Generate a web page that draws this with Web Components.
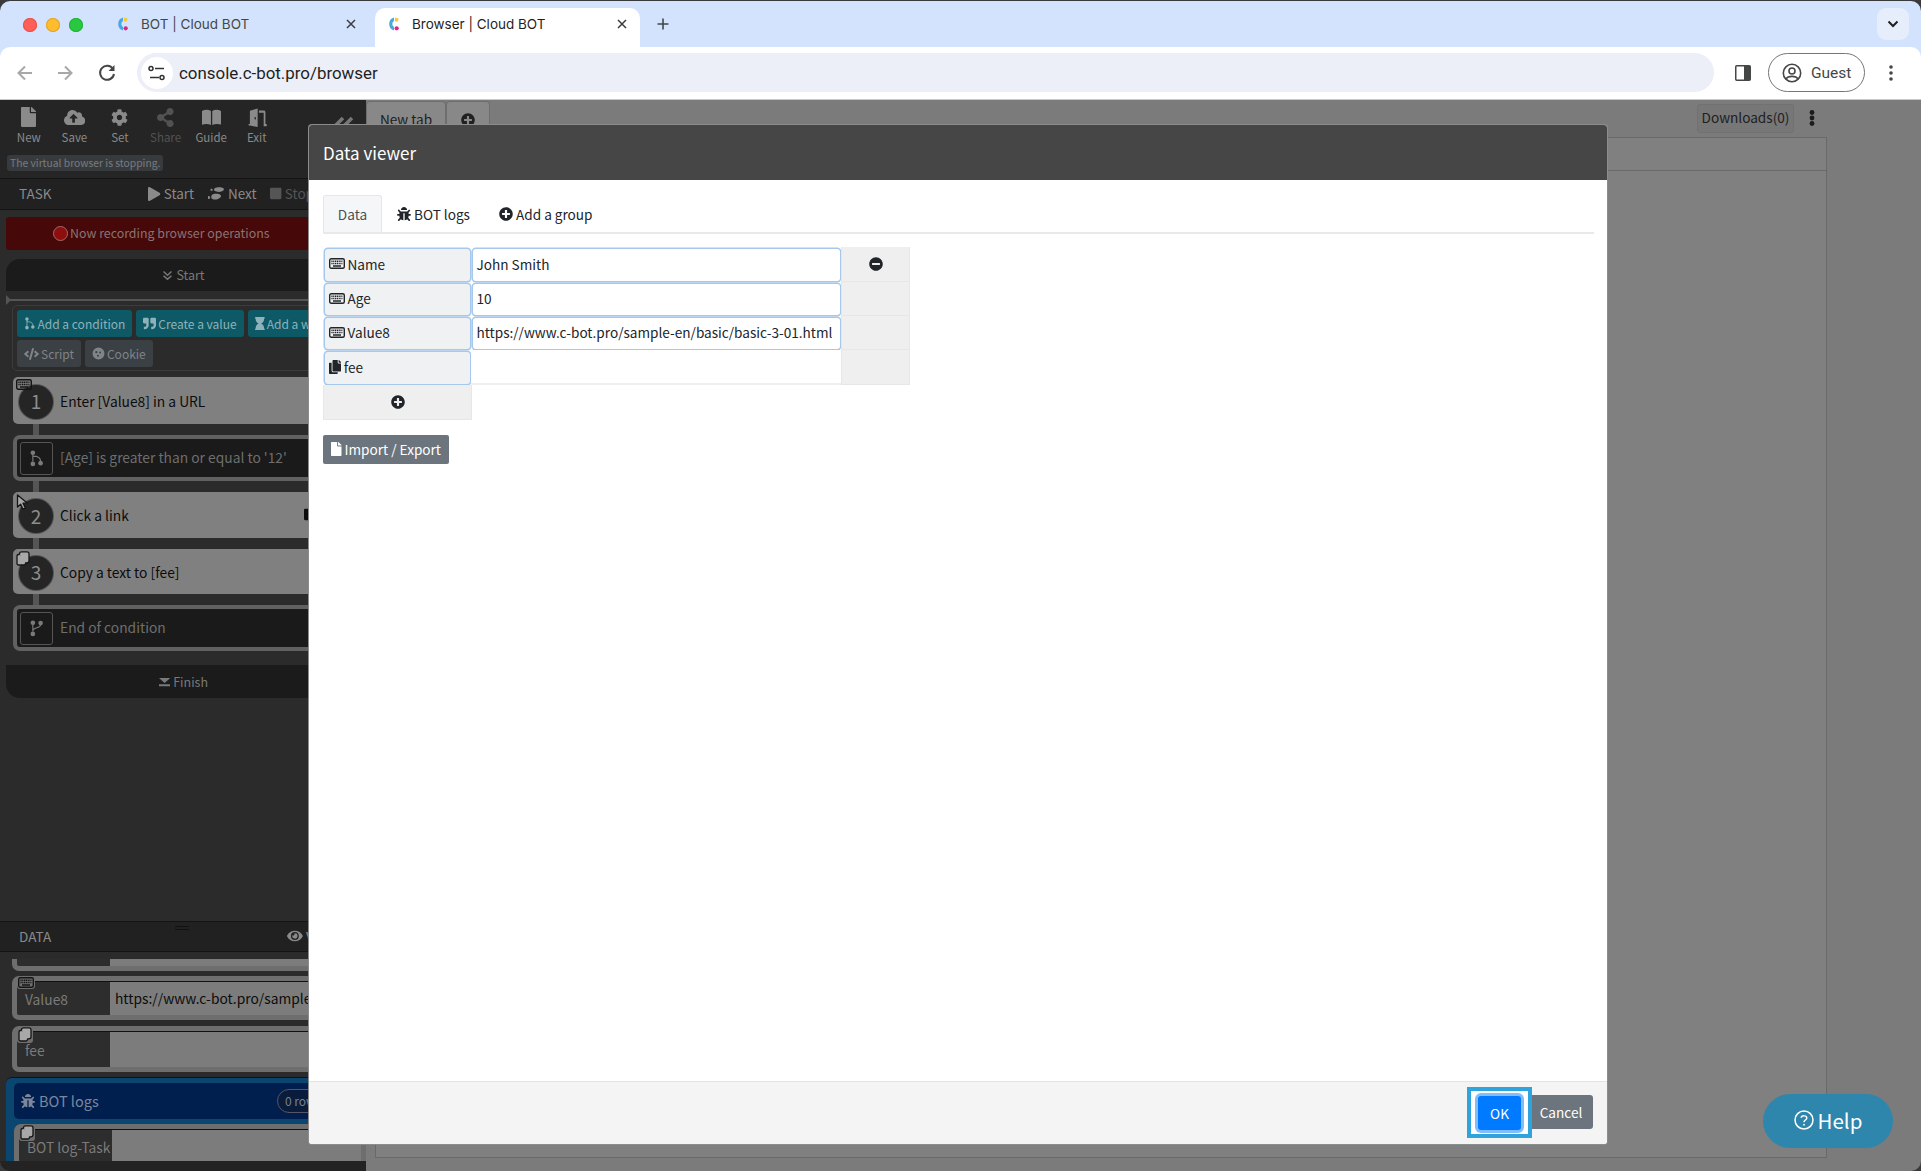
<!DOCTYPE html>
<html lang="en">

<head>
  <meta charset="UTF-8">
  <title>Browser | Cloud BOT</title>
  <link rel="icon" href="data:,">
  <style>
    html,
    body {
      margin: 0;
      height: 100%;
      overflow: hidden;
      background: #3a3a3a;
    }

    body {
      font-family: "Noto Sans CJK JP", "Noto Sans", sans-serif;
    }

    #win {
      display: flex;
      flex-direction: column;
      height: 1170px;
      margin-top: 1px;
      border-radius: 10px;
      overflow: hidden;
      position: relative;
    }
  </style>
</head>

<body>
  <div id="win">
    <browser-chrome></browser-chrome>
    <app-page>
      <app-sidebar></app-sidebar>
      <browser-pane></browser-pane>
    </app-page>
    <data-viewer></data-viewer>
    <help-button></help-button>
  </div>

  <script>
    // [viewBox width, viewBox height, path]
    const ICONS = {
      file: [384, 512, 'M224 136V0H24C10.7 0 0 10.7 0 24v464c0 13.3 10.7 24 24 24h336c13.3 0 24-10.7 24-24V160H248c-13.2 0-24-10.8-24-24zm160-14.1v6.1H256V0h6.1c6.4 0 12.5 2.5 17 7l97.9 98c4.5 4.5 7 10.6 7 16.9z'],
      play: [448, 512, 'M424.4 214.7L72.4 6.6C43.8-10.3 0 6.1 0 47.9V464c0 37.5 40.7 60.1 72.4 41.3l352-208c31.4-18.5 31.5-64.1 0-82.6z'],
      plus: [512, 512, 'M256 8C119 8 8 119 8 256s111 248 248 248 248-111 248-248S393 8 256 8zm144 276c0 6.6-5.4 12-12 12h-92v92c0 6.6-5.4 12-12 12h-56c-6.6 0-12-5.4-12-12v-92h-92c-6.6 0-12-5.4-12-12v-56c0-6.6 5.4-12 12-12h92v-92c0-6.6 5.4-12 12-12h56c6.6 0 12 5.4 12 12v92h92c6.6 0 12 5.4 12 12v56z'],
      minus: [512, 512, 'M256 8C119 8 8 119 8 256s111 248 248 248 248-111 248-248S393 8 256 8zM124 296c-6.6 0-12-5.4-12-12v-56c0-6.6 5.4-12 12-12h264c6.6 0 12 5.4 12 12v56c0 6.6-5.4 12-12 12H124z'],
      stop: [448, 512, 'M400 32H48C21.5 32 0 53.5 0 80v352c0 26.5 21.5 48 48 48h352c26.5 0 48-21.5 48-48V80c0-26.5-21.5-48-48-48z'],
      share: [448, 512, 'M352 320c-22.608 0-43.387 7.819-59.79 20.895l-102.486-64.054a96.551 96.551 0 0 0 0-41.683l102.486-64.054C308.613 184.181 329.392 192 352 192c53.019 0 96-42.981 96-96S405.019 0 352 0s-96 42.981-96 96c0 7.158.79 14.13 2.276 20.841L155.79 180.895C139.387 167.819 118.608 160 96 160c-53.019 0-96 42.981-96 96s42.981 96 96 96c22.608 0 43.387-7.819 59.79-20.895l102.486 64.054A96.301 96.301 0 0 0 256 416c0 53.019 42.981 96 96 96s96-42.981 96-96-42.981-96-96-96z'],
      cog: [512, 512, 'M487.4 315.7l-42.6-24.6c4.3-23.2 4.3-47 0-70.2l42.6-24.6c4.9-2.8 7.1-8.6 5.5-14-11.1-35.6-30-67.8-54.7-94.6-3.8-4.1-10-5.1-14.8-2.3L380.8 110c-17.9-15.4-38.5-27.3-60.8-35.1V25.8c0-5.6-3.9-10.5-9.4-11.7-36.7-8.2-74.3-7.8-109.2 0-5.5 1.2-9.4 6.1-9.4 11.7V75c-22.2 7.9-42.8 19.8-60.8 35.1L88.7 85.5c-4.9-2.8-11-1.9-14.8 2.3-24.7 26.7-43.6 58.9-54.7 94.6-1.7 5.4.6 11.2 5.5 14L67.3 221c-4.3 23.2-4.3 47 0 70.2l-42.6 24.6c-4.9 2.8-7.1 8.6-5.5 14 11.1 35.6 30 67.8 54.7 94.6 3.8 4.1 10 5.1 14.8 2.3l42.6-24.6c17.9 15.4 38.5 27.3 60.8 35.1v49.2c0 5.6 3.9 10.5 9.4 11.7 36.7 8.2 74.3 7.8 109.2 0 5.5-1.2 9.4-6.1 9.4-11.7v-49.2c22.2-7.9 42.8-19.8 60.8-35.1l42.6 24.6c4.9 2.8 11 1.9 14.8-2.3 24.7-26.7 43.6-58.9 54.7-94.6 1.5-5.5-.7-11.3-5.6-14.1zM256 336c-44.1 0-80-35.9-80-80s35.9-80 80-80 80 35.9 80 80-35.9 80-80 80z'],
      upload: [640, 512, 'M537.6 226.6c4.1-10.7 6.4-22.4 6.4-34.6 0-53-43-96-96-96-19.7 0-38.1 6-53.3 16.2C367 64.2 315.3 32 256 32c-88.4 0-160 71.6-160 160 0 2.7.1 5.4.2 8.1C40.2 219.8 0 273.2 0 336c0 79.5 64.5 144 144 144h368c70.7 0 128-57.3 128-128 0-61.9-44-113.6-102.4-125.4zM393.4 288H328v112c0 8.8-7.2 16-16 16h-48c-8.8 0-16-7.2-16-16V288h-65.4c-14.3 0-21.4-17.2-11.3-27.3l105.4-105.4c6.2-6.2 16.4-6.2 22.6 0l105.4 105.4c10.1 10.1 2.9 27.3-11.3 27.3z'],
      book: [24, 20, 'M0 2.500C3.500.6 8 .6 11.200 2.400V20C8 18.300 3.500 18.300 0 19.600zM24 2.500C20.500.6 16 .6 12.800 2.400V20c3.200-1.700 7.700-1.700 11.200-.4z'],
      exit: [24, 22, 'M3 18.500h1.500V3.200L13.500.5V22l-9-1.600H3zM10 10.500v2.500l1.500.3v-2.500zM15 3h5.500c1.200 0 2 .8 2 2v13.500H24V21h-3.500V5.500H15z'],
      copy: [448, 512, 'M320 448v40c0 13.255-10.745 24-24 24H24c-13.255 0-24-10.745-24-24V120c0-13.255 10.745-24 24-24h72v296c0 30.879 25.121 56 56 56h168zm0-344V0H152c-13.255 0-24 10.745-24 24v368c0 13.255 10.745 24 24 24h272c13.255 0 24-10.745 24-24V128H344c-13.2 0-24-10.8-24-24zm120.971-31.029L375.029 7.029A24 24 0 0 0 358.059 0H352v96h96v-6.059a24 24 0 0 0-7.029-16.97z'],
      bug: [512, 512, 'M511.988 288.9c-.478 17.43-15.217 31.1-32.653 31.1H424v16c0 21.864-4.882 42.584-13.6 61.145l60.228 60.228c12.496 12.497 12.496 32.758 0 45.255-12.498 12.497-32.759 12.496-45.256 0l-54.736-54.736C345.886 467.965 314.351 480 280 480V236c0-6.627-5.373-12-12-12h-24c-6.627 0-12 5.373-12 12v244c-34.351 0-65.886-12.035-90.636-32.108l-54.736 54.736c-12.498 12.497-32.759 12.496-45.256 0-12.496-12.497-12.496-32.758 0-45.255l60.228-60.228C92.882 378.584 88 357.864 88 336v-16H32.666C15.23 320 .491 306.33.013 288.9-.484 270.816 14.028 256 32 256h56v-58.745l-46.628-46.628c-12.496-12.497-12.496-32.758 0-45.255 12.498-12.497 32.758-12.497 45.256 0L141.255 160h229.489l54.627-54.627c12.498-12.497 32.758-12.497 45.256 0 12.496 12.497 12.496 32.758 0 45.255L424 197.255V256h56c17.972 0 32.484 14.816 31.988 32.9zM257 0c-61.856 0-112 50.144-112 112h224C369 50.144 318.856 0 257 0z'],
      quote: [512, 512, 'M464 32H336c-26.5 0-48 21.5-48 48v128c0 26.5 21.5 48 48 48h80v64c0 35.3-28.7 64-64 64h-8c-13.3 0-24 10.7-24 24v48c0 13.3 10.7 24 24 24h8c88.4 0 160-71.6 160-160V80c0-26.5-21.5-48-48-48zm-288 0H48C21.5 32 0 53.5 0 80v128c0 26.5 21.5 48 48 48h80v64c0 35.3-28.7 64-64 64h-8c-13.3 0-24 10.7-24 24v48c0 13.3 10.7 24 24 24h8c88.4 0 160-71.6 160-160V80c0-26.5-21.5-48-48-48z'],
      hourglass: [384, 512, 'M360 0H24C10.745 0 0 10.745 0 24v16c0 13.255 10.745 24 24 24 0 90.965 51.016 167.734 120.842 192C75.016 280.266 24 357.035 24 448c-13.255 0-24 10.745-24 24v16c0 13.255 10.745 24 24 24h336c13.255 0 24-10.745 24-24v-16c0-13.255-10.745-24-24-24 0-90.965-51.016-167.734-120.842-192C308.984 231.734 360 154.965 360 64c13.255 0 24-10.745 24-24V24c0-13.255-10.745-24-24-24z'],
      code: [640, 512, 'M278.9 511.5l-61-17.7c-6.4-1.8-10-8.5-8.2-14.9L346.2 8.7c1.8-6.4 8.5-10 14.9-8.2l61 17.7c6.4 1.8 10 8.5 8.2 14.9L293.8 503.3c-1.9 6.4-8.5 10.1-14.9 8.2zm-114-112.2l43.5-46.4c4.6-4.9 4.3-12.7-.8-17.2L117 256l90.6-79.7c5.1-4.5 5.5-12.3.8-17.2l-43.5-46.4c-4.5-4.8-12.1-5.1-17-.5L3.8 247.2c-5.1 4.7-5.1 12.8 0 17.5l144.1 135.1c4.9 4.6 12.5 4.4 17-.5zm327.2.6l144.1-135.1c5.1-4.7 5.1-12.8 0-17.5L492.1 112.1c-4.8-4.5-12.4-4.3-17 .5L431.6 159c-4.6 4.9-4.3 12.7.8 17.2L523 256l-90.6 79.7c-5.1 4.5-5.5 12.3-.8 17.2l43.5 46.4c4.5 4.9 12.1 5.1 17 .6z'],
      cookie: [24, 24, 'M12 1a11 11 0 1 0 0 22 11 11 0 0 0 0-22zM8 7.500a2 2 0 1 1 0 4 2 2 0 0 1 0-4zm7 1a1.700 1.700 0 1 1 0 3.400 1.700 1.700 0 0 1 0-3.400zm-4 6a1.800 1.800 0 1 1 0 3.600 1.800 1.800 0 0 1 0-3.600z'],
      eye: [576, 512, 'M572.52 241.4C518.29 135.59 410.93 64 288 64S57.68 135.64 3.48 241.41a32.35 32.35 0 0 0 0 29.19C57.71 376.41 165.07 448 288 448s230.32-71.64 284.52-177.41a32.35 32.35 0 0 0 0-29.19zM288 400a144 144 0 1 1 144-144 143.93 143.93 0 0 1-144 144zm0-240a95.31 95.31 0 0 0-25.31 3.79 47.85 47.85 0 0 1-66.9 66.9A95.78 95.78 0 1 0 288 160z'],
      steps: [24, 20, 'M10 1.500C13 .2 19 .2 21.500 1.500 24 3 22.500 6 18 6.800c-3 .5-6.500 0-8.500-1.300C8 4.500 8.500 2.300 10 1.500zM7 10.200c4-1 9.500-.5 11 1.300 1.500 2 -.5 5-4.500 6-3.500 .8-7.500.3-8.500-1.500-1-2 .2-5.200 2-5.800zM1 17a2 2 0 1 1 .1 0zM5 5.500a1.500 1.500 0 1 1 .1 0z'],
      dbldown: [16, 16, 'M3 1.500 8 6l5-4.500 1.500 1.500L8 9 1.500 3zM3 7.500 8 12l5-4.500 1.500 1.500L8 15 1.500 9z'],
      finish: [20, 16, 'M0 0h20l-10 9zM0 11h20v3.500H0z']
    };

    class BaseEl extends HTMLElement {
      constructor(html) {
        super();
        this.attachShadow({ mode: 'open' }).innerHTML = html;
      }
    }

    customElements.define('fa-icon', class extends HTMLElement {
      connectedCallback() {
        if (this.shadowRoot) return;
        const [w, h, d] = ICONS[this.getAttribute('name')];
        const size = parseFloat(this.getAttribute('size') || 14);
        this.attachShadow({ mode: 'open' }).innerHTML = `
          <style>:host { display: inline-flex; flex: none; } svg { display: block; fill: currentColor; }</style>
          <svg viewBox="0 0 ${w} ${h}" width="${size * w / h}" height="${size}"><path fill-rule="evenodd" d="${d}"/></svg>`;
      }
    });

    // keyboard used on labels and step badges
    customElements.define('key-icon', class extends BaseEl {
      constructor() {
        super(`<style>:host { display: inline-flex; flex: none; } svg { display: block; }</style>
          <svg width="16" height="11" viewBox="0 0 16 11">
            <rect x=".7" y=".7" width="14.600" height="9.600" rx="1.500" fill="none" stroke="currentColor" stroke-width="1.400"/>
            <path d="M2.400 3.200h11.200M2.400 5.500h11.200" stroke="currentColor" stroke-width="1.500" stroke-dasharray="1.200 .6" fill="none"/>
            <path d="M4 8h8" stroke="currentColor" stroke-width="1.500" fill="none"/>
          </svg>`);
      }
    });

    // flow icons: fork with three dots, type=branch or type=merge
    customElements.define('fork-icon', class extends HTMLElement {
      connectedCallback() {
        if (this.shadowRoot) return;
        const size = parseFloat(this.getAttribute('size') || 14);
        const merge = this.getAttribute('type') === 'merge';
        const curve = merge ? 'M5 5v10M15 6C15 11 5 9 5 14' : 'M5 5v10M5 8C11 8 15 9 15 15';
        const dot = merge ? 4 : 17;
        this.attachShadow({ mode: 'open' }).innerHTML = `
          <style>:host { display: inline-flex; flex: none; } svg { display: block; }</style>
          <svg viewBox="0 0 20 22" width="${size * 20 / 22}" height="${size}" fill="currentColor">
            <path d="${curve}" fill="none" stroke="currentColor" stroke-width="1.500"/>
            <circle cx="5" cy="3.500" r="3"/><circle cx="5" cy="18" r="3"/><circle cx="15" cy="${dot}" r="3"/>
          </svg>`;
      }
    });

    // badges sitting on the corner of a step or data row
    customElements.define('copy-badge', class extends BaseEl {
      constructor() {
        super(`<style>:host { display: inline-flex; flex: none; } svg { display: block; }</style>
          <svg width="14" height="15" viewBox="0 0 14 15" fill="#a8a8a8" stroke="#141414" stroke-width="1.300">
            <rect x="3.500" y=".8" width="9.500" height="11" rx="2"/>
            <path d="M3.500 3.500H2.500a1.500 1.500 0 0 0-1.500 1.500v7.500a1.500 1.500 0 0 0 1.500 1.500H8a1.500 1.500 0 0 0 1.500-1.500v-.7"/>
          </svg>`);
      }
    });

    customElements.define('pointer-badge', class extends BaseEl {
      constructor() {
        super(`<style>:host { display: inline-flex; flex: none; } svg { display: block; }</style>
          <svg width="14" height="17" viewBox="0 0 14 17"><path d="M1.500 1v12l3.200-2.800 2.300 5 2.400-1.100-2.300-4.900h4.400z" fill="#a8a8a8" stroke="#141414" stroke-width="1.300" stroke-linejoin="round"/></svg>`);
      }
    });

    customElements.define('browser-tab', class extends BaseEl {
      constructor() {
        super(`<style>
            :host { display: flex; align-items: center; width: 265px; height: 39px; box-sizing: border-box; padding: 0 12px 8px 10px; border-radius: 10px 10px 0 0; font: 13.500px/20px Inter, Roboto, sans-serif; color: #444746; }
            :host([active]) { background: #fff; color: #1f1f1f; }
            svg.fav { margin-right: 11px; flex: none; }
            .t { flex: 1; white-space: nowrap; }
            .x { width: 12px; height: 12px; }
          </style>
          <svg class="fav" width="16" height="16" viewBox="0 0 16 16">
            <path d="M9 1.500A6.800 6.800 0 0 0 9 14.500V11A3.500 3.500 0 0 1 9 5z" fill="#4aa8e0"/>
            <path d="M10 1.500l3.500 1-.5 3H10z" fill="#f4c93a"/>
            <circle cx="11.700" cy="12.300" r="2.100" fill="#e0267f"/>
          </svg>
          <span class="t"><slot></slot></span>
          <svg class="x" viewBox="0 0 12 12"><path d="M2 2l8 8M10 2l-8 8" stroke="#3c3c3c" stroke-width="1.500"/></svg>`);
      }
    });

    customElements.define('browser-chrome', class extends BaseEl {
      constructor() {
        super(`<style>
            :host { display: block; background: #d3e3fd; flex: none; }
            .tabs { display: flex; align-items: flex-end; height: 46px; position: relative; }
            .lights { display: flex; gap: 9px; padding: 0 0 15px 23px; box-sizing: border-box; flex: none; width: 104px; }
            .lights i { width: 14px; height: 14px; border-radius: 50%; }
            .plus { margin: 0 0 11px 11px; width: 24px; height: 24px; }
            .more { margin: 0 12px 7px auto; width: 32px; height: 32px; border-radius: 9px; background: #e6eefc; display: flex; align-items: center; justify-content: center; }
            .bar { height: 53px; background: #fff; border-radius: 10px 10px 0 0; display: flex; align-items: center; box-sizing: border-box; padding: 0 0 1px 14px; border-bottom: 1px solid #c9c9c9; }
            .nav { width: 22px; height: 22px; margin-right: 18px; flex: none; }
            .omni { flex: none; width: 1577px; height: 39px; border-radius: 20px; background: #eceef8; display: flex; align-items: center; font: 16.900px Roboto, sans-serif; color: #1f1f1f; }
            .site { width: 32px; height: 32px; margin: 0 6px 0 4px; border-radius: 50%; background: #fff; display: flex; align-items: center; justify-content: center; }
            .side { margin: 0 17px 0 21px; }
            .guest { width: 97px; height: 39px; box-sizing: border-box; border: 1px solid #747775; border-radius: 20px; display: flex; align-items: center; gap: 9px; padding-left: 13px; font: 15.500px Roboto, sans-serif; color: #444746; margin-right: 24px; }
          </style>
          <div class="tabs">
            <div class="lights"><i style="background:#ff5f57;box-shadow:inset 0 0 0 1px #e5524c"></i><i style="background:#febc2e;box-shadow:inset 0 0 0 1px #e3a528"></i><i style="background:#28c840;box-shadow:inset 0 0 0 1px #25b33a"></i></div>
            <browser-tab>BOT | Cloud BOT</browser-tab>
            <browser-tab active style="margin-left:6px">Browser | Cloud BOT</browser-tab>
            <svg class="plus" viewBox="0 0 24 24"><path d="M12 6.500v11M6.500 12h11" stroke="#444746" stroke-width="1.600"/></svg>
            <div class="more"><svg width="12" height="8" viewBox="0 0 12 8"><path d="M1.500 1.500 6 6l4.500-4.500" fill="none" stroke="#1f1f1f" stroke-width="2"/></svg></div>
          </div>
          <div class="bar">
            <svg class="nav" viewBox="0 0 22 22"><path d="M18 11H5M11 4.500 4.500 11l6.500 6.500" fill="none" stroke="#a8a8a8" stroke-width="2"/></svg>
            <svg class="nav" viewBox="0 0 22 22"><path d="M4 11h13M11 4.500l6.500 6.500-6.500 6.500" fill="none" stroke="#a8a8a8" stroke-width="2"/></svg>
            <svg class="nav" style="margin:0 19px 0 2px" viewBox="0 0 22 22"><path d="M17 7a7 7 0 1 0 1 5" fill="none" stroke="#444746" stroke-width="2"/><path d="M18.500 3v6h-6z" fill="#444746"/></svg>
            <div class="omni">
              <div class="site"><svg width="20" height="16" viewBox="0 0 20 16" fill="none" stroke="#333" stroke-width="1.500"><circle cx="4" cy="3.500" r="2"/><path d="M8 3.500h9M3 12.500h9"/><circle cx="15" cy="12.500" r="2"/></svg></div>
              console.c-bot.pro/browser
            </div>
            <svg class="side" width="16" height="16" viewBox="0 0 16 16"><rect x=".75" y=".75" width="14.500" height="14.500" rx="1" fill="#fff" stroke="#444746" stroke-width="1.500"/><rect x="9" y="1" width="6" height="14" fill="#444746"/></svg>
            <div class="guest">
              <svg width="20" height="20" viewBox="0 0 20 20" fill="none" stroke="#444746" stroke-width="1.600"><circle cx="10" cy="10" r="8.700"/><circle cx="10" cy="8" r="3"/><path d="M4 16c2-3.500 10-3.500 12 0"/></svg>
              Guest
            </div>
            <svg width="4" height="16" viewBox="0 0 4 16" fill="#444746"><circle cx="2" cy="2" r="1.800"/><circle cx="2" cy="8" r="1.800"/><circle cx="2" cy="14" r="1.800"/></svg>
          </div>`);
      }
    });

    customElements.define('app-page', class extends BaseEl {
      constructor() {
        super(`<style>
            :host { display: flex; flex: 1; min-height: 0; background: #7b7b7b; }
          </style><slot></slot>`);
      }
    });

    customElements.define('tool-button', class extends BaseEl {
      constructor() {
        super(`<style>
            :host { display: flex; flex-direction: column; align-items: center; width: 45.600px; color: #8a8a8a; font-size: 11.500px; line-height: 14px; }
            :host([off]) { color: #525252; }
            .i { height: 22px; display: flex; align-items: center; margin-bottom: 2px; }
          </style><div class="i"><slot name="icon"></slot></div><slot></slot>`);
      }
    });

    customElements.define('mini-button', class extends BaseEl {
      constructor() {
        super(`<style>
            :host { display: inline-flex; align-items: center; justify-content: center; gap: 2px; height: 27px; box-sizing: border-box; padding: 0 7px; border-radius: 3px; background: #3b4045; color: #7f8488; font-size: 12px; white-space: nowrap; flex: none; }
            :host([teal]) { background: #0e5966; color: #8db2b9; }
          </style><slot></slot>`);
      }
    });

    customElements.define('flow-step', class extends BaseEl {
      constructor() {
        super(`<style>
            :host { display: flex; align-items: center; position: relative; height: 46px; margin-left: 13px; width: 352px; box-sizing: border-box; padding-top: 2px; background: #808080; border-radius: 5px; color: #0c0c0c; font-size: 13.800px; white-space: nowrap; }
            :host([cond]) { background: #1a1a1a; border: 4px solid #616161; border-radius: 7px; color: #6e6e6e; padding-top: 0; }
            .num { width: 34px; height: 34px; border-radius: 50%; margin: 0 7px 0 6px; background: #252525; color: #8d8d8d; font-size: 19px; display: flex; align-items: center; justify-content: center; box-shadow: 0 0 0 1px #555; flex: none; }
            .box { width: 33px; height: 33px; margin: 0 7px 0 3px; border: 1px solid #555; border-radius: 3px; color: #7a7a7a; display: flex; align-items: center; justify-content: center; flex: none; box-sizing: border-box; }
            .badge { position: absolute; left: 3px; top: 2px; color: #141414; z-index: 1; line-height: 0; }
            :host([cond]) .num, :host(:not([cond])) .box, :host([cond]) .badge { display: none; }
            ::slotted([slot=end]) { position: absolute; left: 291px; top: 16px; }
          </style>
          <div class="badge"><slot name="badge"></slot></div>
          <div class="num"><slot name="num"></slot></div>
          <div class="box"><slot name="icon"></slot></div>
          <slot></slot><slot name="end"></slot>`);
      }
    });

    customElements.define('data-row', class extends BaseEl {
      constructor() {
        super(`<style>
            :host { display: flex; height: 44px; width: 352px; margin-left: 12px; box-sizing: border-box; border: 5px solid #6e6e6e; border-radius: 7px; position: relative; font-size: 13.800px; flex: none; }
            .name { width: 93px; background: #2d2d2d; color: #7b7b7b; display: flex; align-items: center; padding: 2px 0 0 8px; box-sizing: border-box; border-top: 1px solid #111; border-radius: 0 0 0 5px; white-space: nowrap; }
            .val { flex: 1; background: #7c7c7c; color: #0c0c0c; display: flex; align-items: center; padding-left: 5px; border-top: 1px solid #111; white-space: nowrap; overflow: hidden; }
            .badge { position: absolute; left: 0; top: -5px; color: #141414; background: #6e6e6e; border-radius: 3px; line-height: 0; padding: 1px; }
          </style>
          <div class="badge"><slot name="badge"></slot></div>
          <div class="name"><slot name="name"></slot></div>
          <div class="val"><slot></slot></div>`);
      }
    });

    customElements.define('app-sidebar', class extends BaseEl {
      constructor() {
        super(`<style>
            :host { display: flex; flex-direction: column; width: 366px; flex: none; background: #2b2b2b; overflow: hidden; position: relative; line-height: 1.300; }
            .tools { height: 78px; background: #252525; box-sizing: border-box; padding: 6px 0 0 6px; position: relative; flex: none; }
            .row { display: flex; color: #8a8a8a; }
            .pill { position: absolute; left: 7px; top: 55px; height: 16px; padding: 0 3px; border-radius: 3px; background: #383b3e; color: #797c80; font-size: 10.300px; line-height: 16px; white-space: nowrap; }
            .fold { position: absolute; left: 330px; top: 15px; color: #777; }
            .head { height: 32px; flex: none; background: #212121; border-top: 1px solid #141414; border-bottom: 1px solid #141414; display: flex; align-items: center; padding-left: 19px; box-sizing: border-box; color: #8a8a8a; font-size: 13.500px; }
            .head b { font-weight: 400; }
            .act { display: inline-flex; align-items: center; gap: 3px; white-space: nowrap; }
            .banner { flex: none; height: 33px; margin: 7px 0 0 6px; width: 355px; background: #460808; border-radius: 3px; display: flex; align-items: center; padding-left: 47px; box-sizing: border-box; color: #8b7373; font-size: 12.400px; gap: 2px; white-space: nowrap; }
            .rec { width: 15px; height: 15px; border-radius: 50%; background: #8e0e0e; border: 1.500px solid #a36a6a; box-sizing: border-box; }
            .cap { flex: none; width: 355px; margin: 9px 0 0 6px; height: 32px; background: #1b1b1b; color: #797979; display: flex; align-items: center; justify-content: center; gap: 3px; font-size: 12.500px; box-sizing: border-box; position: relative; }
            .cap.top { border-radius: 14px 14px 0 0; }
            .cap.bot { border-radius: 0 0 14px 14px; margin-top: 14px; height: 33px; padding-top: 2px; }
            .line { flex: none; height: 2px; background: #555; margin: 8px 0 0 6px; position: relative; }
            .line:before { content: ''; position: absolute; left: 0; top: -4px; border-left: 5px solid #555; border-top: 5px solid transparent; border-bottom: 5px solid transparent; }
            .btns { flex: none; width: 350px; height: 66px; margin: 4px 0 0 12px; padding: 4px; box-sizing: border-box; border: 1px solid #3c3c3c; border-radius: 5px; display: flex; flex-direction: column; gap: 3px; overflow: hidden; }
            .btns div { display: flex; gap: 4px; }
            .steps { display: flex; flex-direction: column; gap: 11px; margin-top: 6px; flex: none; position: relative; }
            .steps:before { content: ''; position: absolute; left: 33px; top: 40px; width: 6px; height: 200px; background: #555; }
            .fill { flex: 1; }
            .data-head { position: relative; height: 31px; }
            .grip { position: absolute; left: 175px; top: 4px; width: 14px; height: 4px; border-top: 1.500px solid #111; border-bottom: 1.500px solid #111; box-sizing: border-box; }
            .list { flex: none; display: flex; flex-direction: column; padding-top: 7px; height: 209px; box-sizing: border-box; overflow: hidden; }
            .part { flex: none; height: 12px; margin-left: 12px; width: 352px; border: 5px solid #6e6e6e; border-top: 0; border-radius: 0 0 0 7px; box-sizing: border-box; background: linear-gradient(90deg, #2d2d2d 93px, #7c7c7c 93px); margin-bottom: 5px; }
            .logs { margin: 5px 0 0 6px; flex: 1; background: #0a4670; border-radius: 6px 0 0 0; padding: 5px 0 0 8px; box-sizing: border-box; border-top: 1px solid #111; }
            .lhead { height: 36px; background: #001f4f; border-radius: 5px 0 0 5px; display: flex; align-items: center; padding-left: 7px; color: #7c879c; font-size: 14.500px; gap: 4px; position: relative; }
            .rows { position: absolute; left: 263px; top: 6px; height: 24px; width: 60px; padding-left: 7px; box-sizing: border-box; border: 1px solid #556; border-radius: 12px; font-size: 12px; line-height: 22px; background: #0a1c3c; color: #7a8088; }
            .strip { flex: none; height: 10px; background: #232323; }
          </style>
          <div class="tools">
            <div class="row">
              <tool-button><fa-icon slot="icon" name="file" size="20"></fa-icon>New</tool-button>
              <tool-button><fa-icon slot="icon" name="upload" size="17"></fa-icon>Save</tool-button>
              <tool-button><fa-icon slot="icon" name="cog" size="17"></fa-icon>Set</tool-button>
              <tool-button off><fa-icon slot="icon" name="share" size="19"></fa-icon>Share</tool-button>
              <tool-button><fa-icon slot="icon" name="book" size="16"></fa-icon>Guide</tool-button>
              <tool-button><fa-icon slot="icon" name="exit" size="19"></fa-icon>Exit</tool-button>
            </div>
            <div class="pill">The virtual browser is stopping.</div>
            <svg class="fold" width="24" height="14" viewBox="0 0 24 14" fill="none" stroke="currentColor" stroke-width="3.500"><path d="M3 13 13 3M12 13 22 3"/></svg>
          </div>
          <div class="head">
            <b style="margin-right:97px">TASK</b>
            <span class="act" style="margin-right:14px"><fa-icon name="play" size="14"></fa-icon>Start</span>
            <span class="act" style="margin-right:14px"><fa-icon name="steps" size="14"></fa-icon>Next</span>
            <span class="act" style="color:#555"><fa-icon name="stop" size="13"></fa-icon>Stop</span>
          </div>
          <div class="banner"><span class="rec"></span>Now recording browser operations</div>
          <div class="cap top"><fa-icon name="dbldown" size="11"></fa-icon>Start</div>
          <div class="line"></div>
          <div class="btns">
            <div>
              <mini-button teal style="width:115px"><fork-icon size="13"></fork-icon>Add a condition</mini-button>
              <mini-button teal style="width:108px"><fa-icon name="quote" size="13"></fa-icon>Create a value</mini-button>
              <mini-button teal><fa-icon name="hourglass" size="13"></fa-icon>Add a wait</mini-button>
            </div>
            <div>
              <mini-button><fa-icon name="code" size="12"></fa-icon>Script</mini-button>
              <mini-button><fa-icon name="cookie" size="13"></fa-icon>Cookie</mini-button>
            </div>
          </div>
          <div class="steps">
            <flow-step style="height:47px"><key-icon slot="badge"></key-icon><span slot="num">1</span>Enter [Value8] in a URL</flow-step>
            <flow-step cond><fork-icon slot="icon" size="17"></fork-icon>[Age] is greater than or equal to '12'</flow-step>
            <flow-step><pointer-badge slot="badge"></pointer-badge><span slot="num">2</span>Click a link<fa-icon slot="end" name="stop" size="13"></fa-icon></flow-step>
            <flow-step style="height:45px"><copy-badge slot="badge"></copy-badge><span slot="num">3</span>Copy a text to [fee]</flow-step>
            <flow-step cond><fork-icon slot="icon" type="merge" size="17"></fork-icon>End of condition</flow-step>
          </div>
          <div class="cap bot"><fa-icon name="finish" size="9"></fa-icon>Finish</div>
          <div class="fill"></div>
          <div class="head data-head"><i class="grip"></i><b>DATA</b><span class="act" style="margin-left:236px"><fa-icon name="eye" size="14"></fa-icon>View</span></div>
          <div class="list">
            <div class="part"></div>
            <data-row><key-icon slot="badge"></key-icon><span slot="name">Value8</span>https://www.c-bot.pro/sample-en/basic/basic-3-01.html</data-row>
            <data-row style="margin-top:6px;height:46px"><copy-badge slot="badge"></copy-badge><span slot="name">fee</span></data-row>
            <div class="logs">
              <div class="lhead"><fa-icon name="bug" size="14"></fa-icon>BOT logs<span class="rows">0 rows</span></div>
              <data-row style="margin:5px 0 0 0"><copy-badge slot="badge"></copy-badge><span slot="name">BOT log-Task</span></data-row>
            </div>
          </div>
          <div class="strip"></div>`);
      }
    });

    customElements.define('browser-pane', class extends BaseEl {
      constructor() {
        super(`<style>
            :host { display: flex; flex-direction: column; flex: 1; min-width: 0; color: #202020; font-size: 13.600px; line-height: 1.300; }
            .top { height: 37px; display: flex; box-sizing: border-box; position: relative; flex: none; }
            .tab { margin-top: 1px; height: 36px; background: #888; border: 1px solid #6e6e6e; border-bottom: 0; border-radius: 4px 4px 0 0; display: flex; align-items: center; justify-content: center; box-sizing: border-box; }
            .dl { position: absolute; left: 1331px; top: 4px; width: 97px; height: 29px; box-sizing: border-box; border: 1px solid #717171; border-radius: 3px; background: #777; display: flex; align-items: center; justify-content: center; padding-bottom: 2px; }
            .dots { position: absolute; left: 1443px; top: 10px; }
            .frame { margin: 0 0 13px 9px; flex: 1; width: 1452px; box-sizing: border-box; border: 1px solid #696969; background: #808080; }
            .frame div { height: 32px; border-bottom: 1px solid #696969; }
          </style>
          <div class="top">
            <div class="tab" style="width:80px">New tab</div>
            <div class="tab" style="width:44px"><fa-icon name="plus" size="14"></fa-icon></div>
            <div class="dl">Downloads(0)</div>
            <svg class="dots" width="6" height="16" viewBox="0 0 6 16" fill="#1c1c1c"><circle cx="3" cy="2.500" r="2.400"/><circle cx="3" cy="8" r="2.400"/><circle cx="3" cy="13.500" r="2.400"/></svg>
          </div>
          <div class="frame"><div></div></div>`);
      }
    });

    customElements.define('viewer-row', class extends BaseEl {
      constructor() {
        super(`<style>
            :host { display: grid; grid-template-columns: 148px 370px 69px; height: 34px; font-size: 13.600px; line-height: 20px; color: #212529; }
            .c { display: flex; align-items: center; box-sizing: border-box; margin: 1.500px; border-radius: 3px; gap: 3px; padding: 0 0 2px 4px; white-space: nowrap; overflow: hidden; }
            .name { background: #eff1f3; box-shadow: 0 0 0 1.500px #a5c8ec; }
            .val { background: #fff; box-shadow: 0 0 0 1.500px #a5c8ec; overflow: hidden; }
            :host([empty]) .val { box-shadow: none; border-bottom: 2px solid #efefef; margin: 0; border-radius: 0; }
            .act { background: #efefef; margin: 0; border: 1px solid #e7e7e7; border-top: 0; justify-content: center; padding: 0; border-radius: 0; }
          </style>
          <div class="c name"><slot name="icon"></slot><slot name="name"></slot></div>
          <div class="c val"><slot></slot></div>
          <div class="c act"><slot name="act"></slot></div>`);
      }
    });

    customElements.define('data-viewer', class extends BaseEl {
      constructor() {
        super(`<style>
            :host { position: absolute; z-index: 10; left: 309px; top: 124px; width: 1298px; height: 1019px; display: flex; flex-direction: column; background: #fff; border-radius: 3px; overflow: hidden; box-shadow: 0 0 0 1px #8c8c8c; font-size: 13.600px; line-height: 20px; color: #212529; }
            .hd { height: 55px; flex: none; background: #464646; color: #fff; font-size: 17px; display: flex; align-items: center; padding-left: 14px; }
            .bd { flex: 1; padding: 15px 13px 0 14px; display: flex; flex-direction: column; align-items: flex-start; }
            .tabs { display: flex; align-self: stretch; height: 37px; border-bottom: 2px solid #e9e9e9; flex: none; }
            .tab { display: flex; align-items: center; gap: 3px; height: 37px; box-sizing: border-box; }
            .tab.on { width: 59px; justify-content: center; background: #f5f6f7; border: 1px solid #e6e6e6; border-bottom: 0; border-radius: 3px 3px 0 0; color: #495057; margin-right: 15px; }
            .grid { margin-top: 13px; display: flex; flex-direction: column; flex: none; }
            .add { width: 149px; height: 35px; background: #efefef; border: 1px solid #e7e7e7; border-top: 0; box-sizing: border-box; display: flex; align-items: center; justify-content: center; }
            .imp { margin-top: 15px; width: 126px; height: 29px; background: #6c757d; color: #fff; border-radius: 2px; display: flex; align-items: center; justify-content: center; gap: 3px; flex: none; padding-bottom: 2px; box-sizing: border-box; }
            .ft { flex: none; height: 63px; background: #f4f4f4; border-top: 1px solid #e2e3e8; display: flex; justify-content: flex-end; align-items: flex-start; padding: 5px 14px 0 0; box-sizing: border-box; }
            .focus { width: 65px; height: 51px; border: 4px solid #2ea3dc; background: #fff; box-sizing: border-box; display: flex; align-items: center; justify-content: center; z-index: 1; }
            .ok { width: 43px; height: 34px; background: #007bff; color: #fff; border-radius: 3px; box-shadow: 0 0 0 3px #80bdff; display: flex; align-items: center; justify-content: center; }
            .cancel { margin-top: 8px; width: 61px; height: 34px; background: #6c757d; color: #fff; border-radius: 0 3px 3px 0; display: flex; align-items: center; justify-content: center; padding-right: 3px; box-sizing: border-box; }
          </style>
          <div class="hd">Data viewer</div>
          <div class="bd">
            <div class="tabs">
              <div class="tab on">Data</div>
              <div class="tab" style="margin-right:29px"><fa-icon name="bug" size="14"></fa-icon>BOT logs</div>
              <div class="tab"><fa-icon name="plus" size="14"></fa-icon>Add a group</div>
            </div>
            <div class="grid">
              <viewer-row style="height:35px"><key-icon slot="icon"></key-icon><span slot="name">Name</span>John Smith<fa-icon slot="act" name="minus" size="14"></fa-icon></viewer-row>
              <viewer-row><key-icon slot="icon"></key-icon><span slot="name">Age</span>10</viewer-row>
              <viewer-row><key-icon slot="icon"></key-icon><span slot="name">Value8</span>https://www.c-bot.pro/sample-en/basic/basic-3-01.html</viewer-row>
              <viewer-row empty style="height:35px"><fa-icon slot="icon" name="copy" size="14"></fa-icon><span slot="name">fee</span></viewer-row>
              <div class="add"><fa-icon name="plus" size="14"></fa-icon></div>
            </div>
            <div class="imp"><fa-icon name="file" size="14"></fa-icon>Import / Export</div>
          </div>
          <div class="ft">
            <div class="focus"><div class="ok">OK</div></div>
            <div class="cancel">Cancel</div>
          </div>`);
      }
    });

    customElements.define('help-button', class extends BaseEl {
      constructor() {
        super(`<style>
            :host { position: absolute; z-index: 10; left: 1763px; top: 1093px; width: 130px; height: 54px; box-sizing: border-box; padding-bottom: 2px; border-radius: 27px; background: #2e86ad; color: #fff; display: flex; align-items: center; justify-content: center; gap: 4px; font-size: 20.500px; }
          </style>
          <svg width="20" height="20" viewBox="0 0 20 20" fill="none" stroke="#fff" stroke-width="1.500"><circle cx="10" cy="10" r="9"/><path d="M7.200 7.800C7.400 5.200 12.800 5.200 12.800 8c0 2-2.800 2-2.800 4.200"/><path d="M10 14v1.500" stroke-width="1.700"/></svg>
          Help`);
      }
    });
  </script>
</body>

</html>
